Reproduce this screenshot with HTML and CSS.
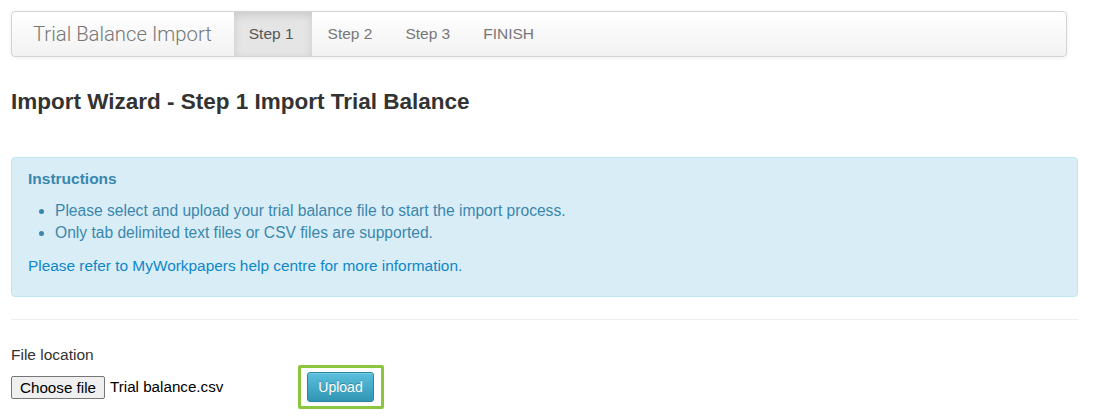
FILE: index.html
```html
<!DOCTYPE html>
<html>
<head>
<meta charset="utf-8">
<link rel="stylesheet" href="styles.css">
</head>
<body>
<div class="page">
  <div class="navbar">
    <span class="brand">Trial Balance Import</span>
    <ul class="nav">
      <li class="active">Step 1</li>
      <li>Step 2</li>
      <li>Step 3</li>
      <li>FINISH</li>
    </ul>
  </div>
  <h3 class="title">Import Wizard - Step 1 Import Trial Balance</h3>
  <div class="alert">
    <h4 class="alert-heading">Instructions</h4>
    <ul class="alert-list">
      <li>Please select and upload your trial balance file to start the import process.</li>
      <li>Only tab delimited text files or CSV files are supported.</li>
    </ul>
    <p class="alert-link">Please refer to MyWorkpapers help centre for more information.</p>
  </div>
  <hr class="divider">
  <div class="form">
    <label class="label">File location</label>
    <div class="file-row">
      <div class="file">
        <span class="file-btn">Choose file</span>
        <span class="file-name">Trial balance.csv</span>
      </div>
      <div class="highlight">
        <button class="btn-upload">Upload</button>
      </div>
    </div>
  </div>
</div>
</body>
</html>
```
FILE: styles.css
```css
* { box-sizing: border-box; }
html, body { margin: 0; padding: 0; background: #fff; }
body {
  font-family: "Liberation Sans", Arial, sans-serif;
  font-size: 15.5px;
  line-height: 20px;
  color: #333;
}
.page {
  padding: 11px 30px 0 11px;
}
.navbar {
  display: flex;
  align-items: stretch;
  height: 46px;
  width: 1056px;
  border: 1px solid #d4d4d4;
  border-radius: 4px;
  background: linear-gradient(to bottom, #ffffff, #f2f2f2);
  box-shadow: 0 1px 4px rgba(0,0,0,0.065);
}
.brand {
  display: flex;
  align-items: center;
  padding: 0 22px 0 21px;
  font-family: Roboto, "Liberation Sans", sans-serif;
  font-weight: 300;
  font-size: 20.3px;
  color: #777;
}
.nav {
  display: flex;
  margin: 0;
  padding: 0;
  list-style: none;
}
.nav li {
  display: flex;
  align-items: center;
  padding: 0 17px 0 16px;
  color: #777;
  font-size: 15.5px;
}
.nav li.active {
  background: #e5e5e5;
  color: #555;
  box-shadow: inset 0 3px 8px rgba(0,0,0,0.125);
  padding: 0 18px 0 15px;
}
.title {
  margin: 32px 0 0;
  font-size: 22.5px;
  line-height: 26px;
  font-weight: bold;
  color: #333;
}
.alert {
  margin-top: 42px;
  width: 1067px;
  padding: 11px 16px 19px;
  background: #d9edf7;
  border: 1px solid #bce8f1;
  border-radius: 4px;
  color: #3a87ad;
}
.alert-heading {
  margin: 0;
  font-size: 15.5px;
  line-height: 20px;
  font-weight: bold;
}
.alert-list {
  margin: 11px 0 0;
  padding-left: 27px;
  font-size: 15.6px;
}
.alert-list li { line-height: 22px; }
.alert-link {
  margin: 11px 0 0;
  line-height: 22px;
  font-size: 15.4px;
  color: #0e87c9;
}
.divider {
  margin: 22px 0 0;
  width: 1067px;
  border: 0;
  border-top: 1px solid #eee;
}
.form { margin-top: 25px; }
.label {
  display: block;
  line-height: 20px;
  color: #333;
}
.file-row {
  display: flex;
  align-items: center;
  margin-top: 0;
}
.file {
  display: flex;
  align-items: center;
  width: 287px;
}
.file-btn {
  display: inline-block;
  height: 23px;
  padding: 0 8px;
  line-height: 21px;
  font-size: 15.2px;
  color: #000;
  background: #efefef;
  border: 1px solid #767676;
  border-radius: 2px;
}
.file-name {
  margin-left: 5px;
  font-size: 15.2px;
  color: #000;
}
.highlight {
  border: 3px solid #8cc63f;
  padding: 4px 7px 4px 6px;
  border-radius: 2px;
}
.btn-upload {
  display: block;
  width: 67px;
  height: 30px;
  padding: 0;
  font-family: "Liberation Sans", Arial, sans-serif;
  font-size: 14px;
  color: #fff;
  text-shadow: 0 -1px 0 rgba(0,0,0,0.25);
  background: linear-gradient(to bottom, #5bc0de, #2f96b4);
  border: 1px solid #2a85a0;
  border-radius: 3px;
  box-shadow: inset 0 1px 0 rgba(255,255,255,0.2), 0 1px 2px rgba(0,0,0,0.05);
}
```
